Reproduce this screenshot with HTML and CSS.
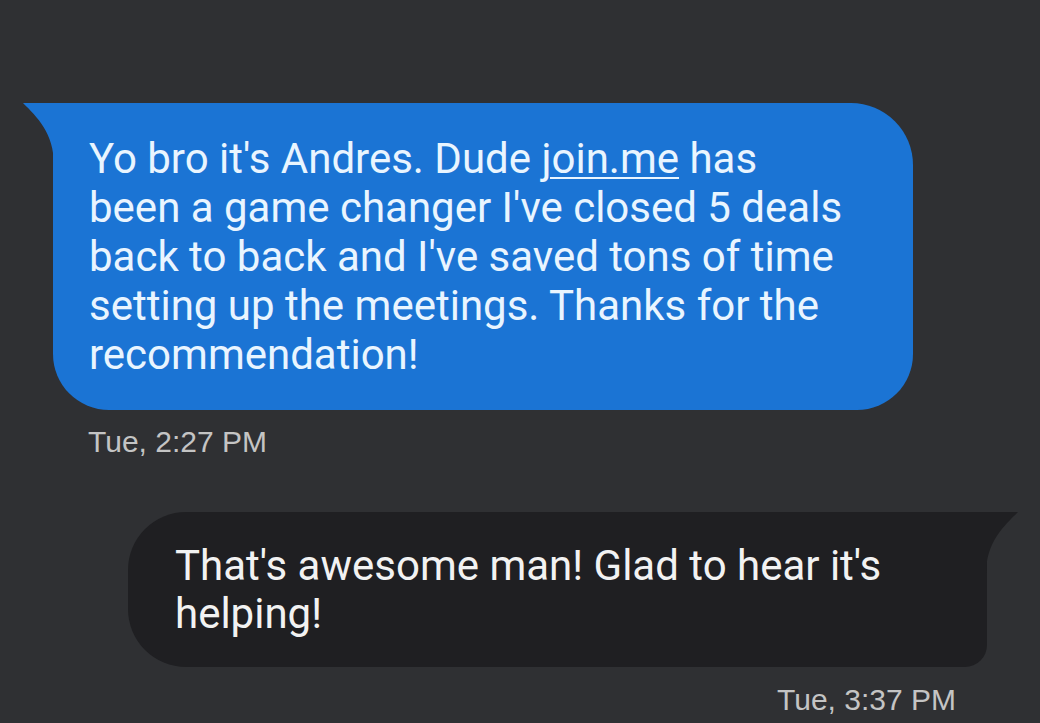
FILE: index.html
```html
<!DOCTYPE html>
<html>
<head>
<meta charset="utf-8">
<link rel="stylesheet" href="styles.css">
</head>
<body>
<main class="thread">
  <div class="msg msg-in">
    <div class="bubble bubble-in">
      <svg class="tail tail-in" width="31" height="62" viewBox="0 0 31 62"><path d="M31,0 L0,0 C14,14 31,30 31,62 Z" fill="#1b74d4"/></svg>
      <p class="text">Yo bro it's Andres. Dude <span class="link">join.me</span> has<br>been a game changer I've closed 5 deals<br>back to back and I've saved tons of time<br>setting up the meetings. Thanks for the<br>recommendation!</p>
    </div>
    <div class="time time-in">Tue, 2:27 PM</div>
  </div>
  <div class="msg msg-out">
    <div class="bubble bubble-out">
      <svg class="tail tail-out" width="32" height="62" viewBox="0 0 32 62"><path d="M0,0 L32,0 C18,14 0,30 0,62 Z" fill="#1f1f22"/></svg>
      <p class="text">That's awesome man! Glad to hear it's<br>helping!</p>
    </div>
    <div class="time time-out">Tue, 3:37 PM</div>
  </div>
</main>
</body>
</html>
```

FILE: styles.css
```css
html, body {
  margin: 0;
  padding: 0;
  background: #2f3033;
}
body {
  width: 1040px;
  height: 723px;
  overflow: hidden;
}
.thread {
  display: flex;
  flex-direction: column;
  padding-top: 103px;
}
.msg {
  display: flex;
  flex-direction: column;
}
.bubble {
  position: relative;
  width: 860px;
  box-sizing: border-box;
}
.text {
  margin: 0;
  font-family: Roboto, "Liberation Sans", sans-serif;
  font-size: 42px;
  line-height: 49px;
  white-space: nowrap;
}
.bubble-in {
  margin-left: 53px;
  background: #1b74d4;
  border-radius: 0 62px 56px 56px;
  padding: 31px 20px 31px 36px;
}
.bubble-in .text {
  color: #e9f5ff;
}
.link {
  text-decoration: underline;
  text-decoration-thickness: 2px;
  text-underline-offset: 4px;
}
.tail {
  position: absolute;
  top: 0;
}
.tail-in {
  left: -30px;
}
.tail-out {
  right: -31px;
}
.bubble-out {
  margin-left: 128px;
  width: 859px;
  background: #1f1f22;
  border-radius: 58px 0 22px 58px;
  padding: 30px 20px 29px 47px;
}
.bubble-out .text {
  color: #f2f2f2;
  line-height: 48px;
}
.time {
  font-family: "Liberation Sans", Arial, sans-serif;
  font-size: 30px;
  line-height: 34px;
  color: #c4c4c4;
}
.time-in {
  margin: 15px 0 53px 88px;
}
.time-out {
  margin-top: 16px;
  align-self: flex-end;
  margin-right: 84px;
}
```
